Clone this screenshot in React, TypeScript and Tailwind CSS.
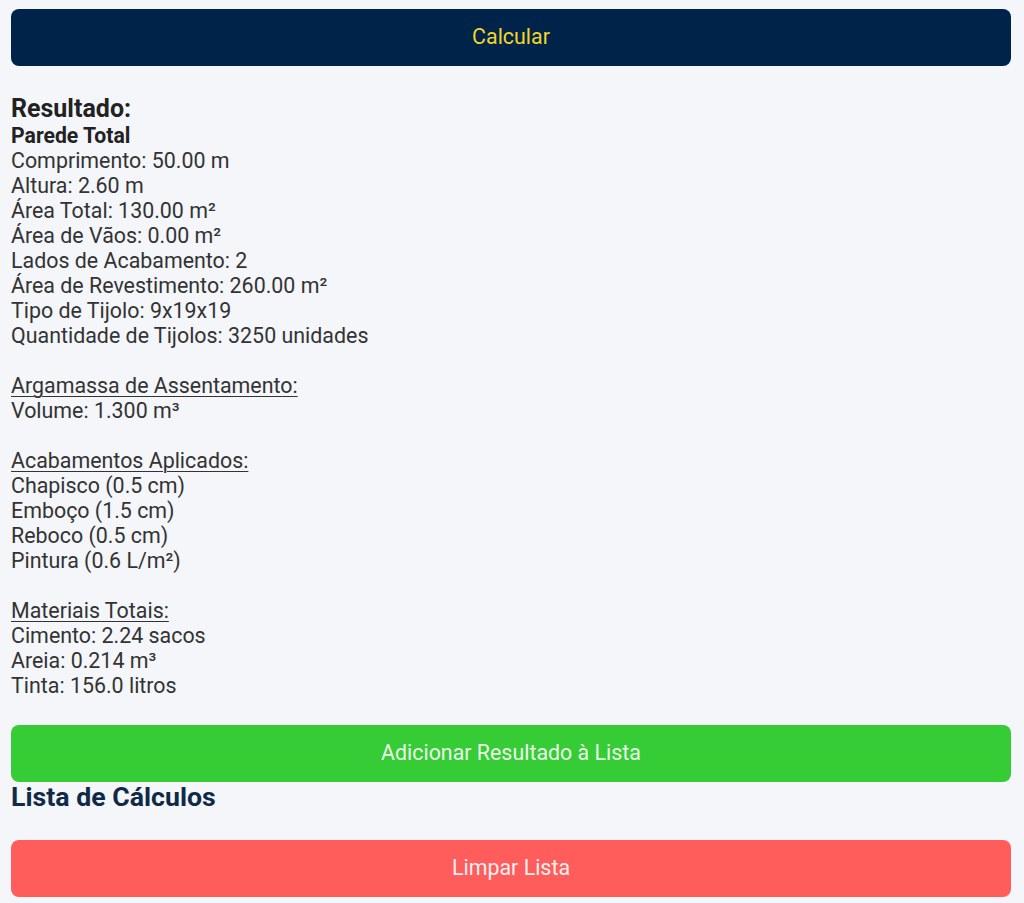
import type { ReactNode } from "react";

type Line = { text: string; kind?: "bold" | "title" | "blank" };

const lines: Line[] = [
    { text: "Parede Total", kind: "bold" },
    { text: "Comprimento: 50.00 m" },
    { text: "Altura: 2.60 m" },
    { text: "Área Total: 130.00 m²" },
    { text: "Área de Vãos: 0.00 m²" },
    { text: "Lados de Acabamento: 2" },
    { text: "Área de Revestimento: 260.00 m²" },
    { text: "Tipo de Tijolo: 9x19x19" },
    { text: "Quantidade de Tijolos: 3250 unidades" },
    { text: "", kind: "blank" },
    { text: "Argamassa de Assentamento:", kind: "title" },
    { text: "Volume: 1.300 m³" },
    { text: "", kind: "blank" },
    { text: "Acabamentos Aplicados:", kind: "title" },
    { text: "Chapisco (0.5 cm)" },
    { text: "Emboço (1.5 cm)" },
    { text: "Reboco (0.5 cm)" },
    { text: "Pintura (0.6 L/m²)" },
    { text: "", kind: "blank" },
    { text: "Materiais Totais:", kind: "title" },
    { text: "Cimento: 2.24 sacos" },
    { text: "Areia: 0.214 m³" },
    { text: "Tinta: 156.0 litros" },
];

function ActionButton({ className, children }: { className: string; children: ReactNode }) {
    return (
        <button type="button" className={`flex h-[57px] w-full items-center justify-center rounded-lg text-[21.4px] ${className}`}>
            {children}
        </button>
    );
}

export default function App() {
    return (
        <div className="min-h-[903px] bg-[#f4f6fa] px-[11px] pt-[9px] text-[#333333]" style={{ fontFamily: "Roboto, 'Noto Sans', sans-serif" }}>
            <div className="w-[1000px]">
                <ActionButton className="bg-[#00234a] text-[#f2d42a]">Calcular</ActionButton>

                <div className="mt-[28px]">
                    <h2 className="text-[25px] leading-[29px] font-bold text-[#222222]">Resultado:</h2>
                    <div className="text-[21.4px] leading-[25px]">
                        {lines.map((line, i) => {
                            if (line.kind === "blank") return <div key={i} className="h-[25px]" />;
                            if (line.kind === "bold")
                                return (
                                    <div key={i} className="text-[21.2px] font-bold text-[#222222]">
                                        {line.text}
                                    </div>
                                );
                            if (line.kind === "title")
                                return (
                                    <div key={i} className="underline decoration-1 underline-offset-[3px]">
                                        {line.text}
                                    </div>
                                );
                            return <div key={i}>{line.text}</div>;
                        })}
                    </div>
                </div>

                <div className="mt-[27px]">
                    <ActionButton className="bg-[#35cc35] text-[#eaf7e8]">Adicionar Resultado à Lista</ActionButton>
                </div>
                <h2 className="mt-[-1px] text-[26.7px] leading-[32px] font-bold text-[#0f2a47]">Lista de Cálculos</h2>

                <div className="mt-[27px]">
                    <ActionButton className="bg-[#ff5c5c] text-[#fdf0f0]">Limpar Lista</ActionButton>
                </div>
            </div>
        </div>
    );
}
